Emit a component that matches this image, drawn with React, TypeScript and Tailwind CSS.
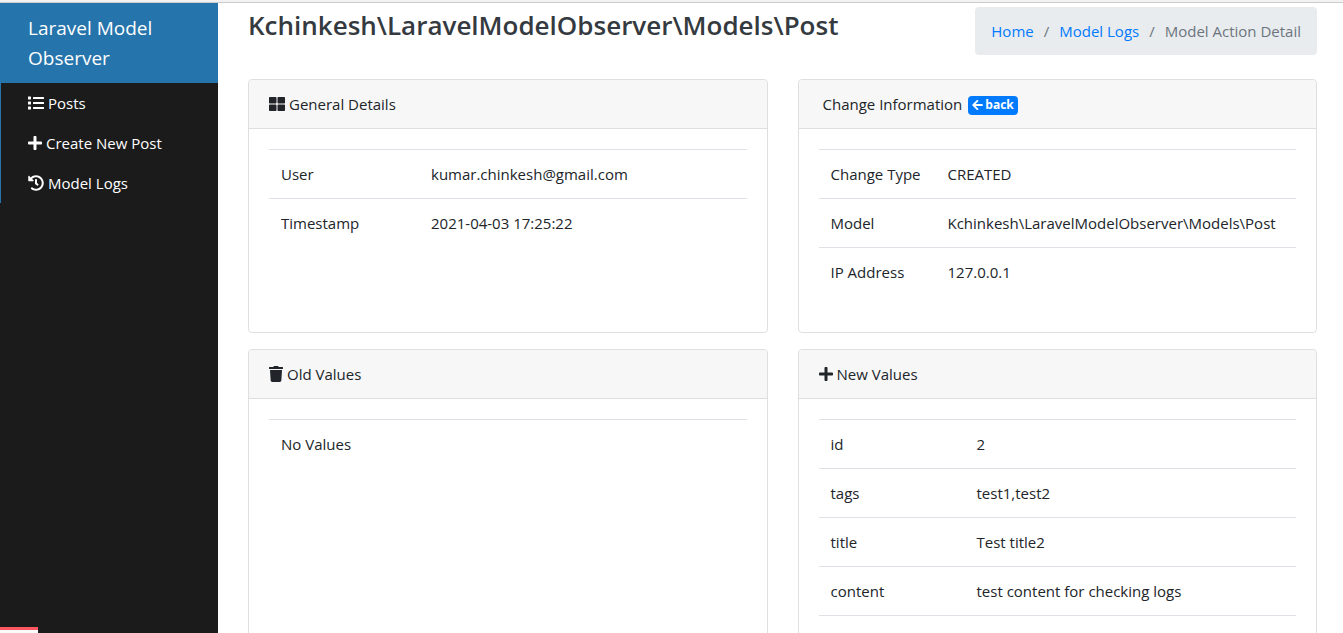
import type { ReactNode } from "react";
import {
  FaArrowLeft,
  FaHistory,
  FaList,
  FaPlus,
  FaThLarge,
  FaTrash,
} from "react-icons/fa";

type Row = [string, string?];

const menu = [
  { label: "Posts", icon: <FaList className="h-4 w-4" /> },
  { label: "Create New Post", icon: <FaPlus className="h-4 w-[14px]" /> },
  { label: "Model Logs", icon: <FaHistory className="h-4 w-4" /> },
];

function Card({
  title,
  children,
  className = "",
}: {
  title: ReactNode;
  children: ReactNode;
  className?: string;
}) {
  return (
    <section
      className={`flex flex-col rounded border border-[#dfdfdf] bg-white ${className}`}
    >
      <header className="flex h-[49px] shrink-0 items-center gap-1 rounded-t border-b border-[#dfdfdf] bg-[#f7f7f7] px-5">
        {title}
      </header>
      <div className="p-5">{children}</div>
    </section>
  );
}

function DetailTable({ rows, first }: { rows: Row[]; first: string }) {
  return (
    <table className="w-full table-fixed border-collapse">
      <tbody>
        {rows.map(([name, value]) => (
          <tr key={name} className="h-[49px] border-t border-[#dee2e6]">
            <td className={`${first} px-3 py-0`}>{name}</td>
            {value !== undefined && (
              <td className="px-3 py-0 whitespace-nowrap">{value}</td>
            )}
          </tr>
        ))}
      </tbody>
    </table>
  );
}

export default function App() {
  return (
    <div className="relative flex h-screen flex-col overflow-hidden bg-white font-['Open_Sans','Noto_Sans',sans-serif] text-[15px] leading-6 text-[#212529]">
      <div className="h-[3px] shrink-0 border-b border-[#cccccc] bg-[#f2f2f2]" />
      <div className="flex min-h-0 flex-1">
        <aside className="w-[218px] shrink-0 bg-[#1b1b1b] text-white">
          <a
            href="#"
            className="block bg-[#2574ab] py-[10px] pr-10 pl-7 text-[19px] leading-[30px]"
          >
            Laravel Model Observer
          </a>
          <nav className="border-l border-[#2574ab]">
            {menu.map((item) => (
              <a
                key={item.label}
                href="#"
                className="flex h-10 items-center gap-1 pl-[27px]"
              >
                {item.icon}
                {item.label}
              </a>
            ))}
          </nav>
        </aside>

        <main className="min-w-0 flex-1 pt-1 pr-[26px] pl-[30px]">
          <div className="flex items-start justify-between pb-6">
            <h1 className="text-[26px] leading-9 font-semibold whitespace-nowrap text-[#343a40]">
              Kchinkesh\LaravelModelObserver\Models\Post
            </h1>
            <nav
              aria-label="Breadcrumb"
              className="flex h-12 items-center gap-[10px] rounded bg-[#e9ecef] px-4 whitespace-nowrap text-[#6c757d]"
            >
              <a href="#" className="text-[#007bff]">
                Home
              </a>
              <span>/</span>
              <a href="#" className="text-[#007bff]">
                Model Logs
              </a>
              <span>/</span>
              <span>Model Action Detail</span>
            </nav>
          </div>

          <div className="grid grid-cols-2 gap-x-[30px] gap-y-4">
            <Card
              className="min-h-[254px]"
              title={
                <>
                  <FaThLarge className="h-4 w-4" />
                  <h2>General Details</h2>
                </>
              }
            >
              <DetailTable
                first="w-[150px]"
                rows={[
                  ["User", "kumar.chinkesh@gmail.com"],
                  ["Timestamp", "2021-04-03 17:25:22"],
                ]}
              />
            </Card>

            <Card
              title={
                <>
                  <h2 className="pr-[2px] pl-1">Change Information</h2>
                  <a
                    href="#"
                    className="mt-[2px] flex h-[19px] items-center gap-[2px] rounded bg-[#007bff] px-1 text-[12px] leading-none font-bold text-white"
                  >
                    <FaArrowLeft className="h-3 w-[11px]" />
                    back
                  </a>
                </>
              }
            >
              <DetailTable
                first="w-[117px]"
                rows={[
                  ["Change Type", "CREATED"],
                  ["Model", "Kchinkesh\\LaravelModelObserver\\Models\\Post"],
                  ["IP Address", "127.0.0.1"],
                ]}
              />
            </Card>

            <Card
              title={
                <>
                  <FaTrash className="h-4 w-[14px]" />
                  <h2>Old Values</h2>
                </>
              }
            >
              <DetailTable first="w-full" rows={[["No Values"]]} />
            </Card>

            <Card
              className="min-h-[304px]"
              title={
                <>
                  <FaPlus className="h-4 w-[14px]" />
                  <h2>New Values</h2>
                </>
              }
            >
              <DetailTable
                first="w-[146px]"
                rows={[
                  ["id", "2"],
                  ["tags", "test1,test2"],
                  ["title", "Test title2"],
                  ["content", "test content for checking logs"],
                  ["", ""],
                ]}
              />
            </Card>
          </div>
        </main>
      </div>
      <div className="absolute bottom-0 left-0 h-[6px] w-[38px] border-t-3 border-[#ff5661] bg-[#fafafa]" />
    </div>
  );
}
